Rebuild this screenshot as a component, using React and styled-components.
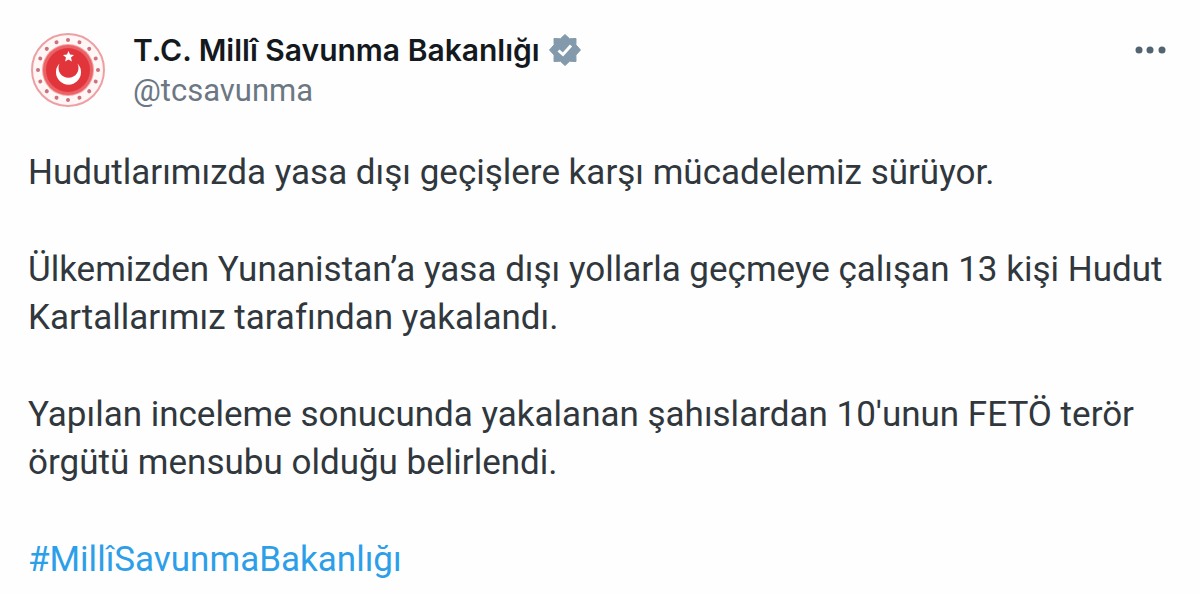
import React from "react";
import styled, { createGlobalStyle } from "styled-components";

const GlobalStyle = createGlobalStyle`
  * {
    box-sizing: border-box;
  }
  body {
    margin: 0;
    background: #fefefe;
    color: #30373d;
    font-family: Roboto, "Liberation Sans", sans-serif;
  }
`;

const Post = styled.article`
  padding: 29px 28px 8px;
`;

const Header = styled.header`
  display: flex;
  align-items: flex-start;
`;

const Avatar = styled.svg`
  flex: none;
  width: 80px;
  height: 80px;
`;

const Names = styled.div`
  flex: 1;
  padding-left: 25px;
`;

const NameRow = styled.div`
  display: flex;
  align-items: center;
  gap: 8px;
  height: 42px;
`;

const Name = styled.a`
  color: #14191e;
  font-family: Inter, Roboto, sans-serif;
  font-size: 30px;
  font-weight: 600;
  line-height: 42px;
  text-decoration: none;
`;

const Badge = styled.svg`
  width: 34px;
  height: 34px;
`;

const Handle = styled.a`
  display: block;
  color: #6b7883;
  font-size: 31px;
  line-height: 40px;
  text-decoration: none;
`;

const MoreButton = styled.button`
  display: flex;
  align-items: center;
  height: 42px;
  padding: 0;
  border: 0;
  background: none;
  cursor: pointer;
`;

const Body = styled.div`
  display: flex;
  flex-direction: column;
  gap: 49px;
  padding-top: 38px;
`;

const Text = styled.p`
  margin: 0;
  font-size: 35px;
  line-height: 48px;
`;

const Hashtag = styled.a`
  color: #2d9fe9;
  text-decoration: none;
`;

const stars = Array.from({ length: 16 }, (_, i) => i * 22.5);

const Emblem = () => (
  <Avatar viewBox="0 0 80 80" role="img" aria-label="T.C. Millî Savunma Bakanlığı">
    <circle cx="40" cy="41" r="36" fill="#fff6f5" stroke="#eda0a3" strokeWidth="2" />
    {stars.map((angle) => (
      <circle
        key={angle}
        cx="40"
        cy="11"
        r="2"
        fill="#c9737d"
        transform={`rotate(${angle} 40 41)`}
      />
    ))}
    <circle cx="40" cy="41" r="26" fill="#f3a3a3" />
    <circle cx="40" cy="41" r="25" fill="#ea6266" />
    <circle cx="40" cy="41" r="22" fill="#e2353b" />
    <path d="M31.500 34.500A12.500 12.500 0 1 0 49.500 34.500A10 10 0 1 1 31.500 34.500Z" fill="#fff" />
    <path
      d="M40.500 22l1.500 3.500 4 .4-3 2.700.9 4-3.400-2-3.400 2 .9-4-3-2.700 4-.4z"
      fill="#fff"
    />
  </Avatar>
);

const Verified = () => (
  <Badge viewBox="0 0 34 34" role="img" aria-label="Onaylı hesap">
    <path
      d="M17 1.500l4.600 4.300 6.400-.3-.1 6.300 4.600 5.200-4.600 5 .1 6.500-6.400-.3-4.600 4.300-4.600-4.300-6.400.3.1-6.500-4.600-5 4.600-5.200-.1-6.300 6.400.3z"
      fill="#829aab"
      stroke="#829aab"
      strokeLinejoin="round"
    />
    <path d="M10.500 17.500l4.500 4 8-9" fill="none" stroke="#fff" strokeWidth="3" />
  </Badge>
);

const App = () => {
  return (
    <>
      <GlobalStyle />
      <Post>
        <Header>
          <Emblem />
          <Names>
            <NameRow>
              <Name href="#profil">T.C. Millî Savunma Bakanlığı</Name>
              <Verified />
            </NameRow>
            <Handle href="#profil">@tcsavunma</Handle>
          </Names>
          <MoreButton aria-label="Daha fazla">
            <svg width="38" height="10" viewBox="0 0 38 10" fill="#536471">
              <circle cx="5" cy="5" r="3.500" />
              <circle cx="16" cy="5" r="3.500" />
              <circle cx="28" cy="5" r="3.500" />
            </svg>
          </MoreButton>
        </Header>
        <Body lang="tr">
          <Text>Hudutlarımızda yasa dışı geçişlere karşı mücadelemiz sürüyor.</Text>
          <Text>
            Ülkemizden Yunanistan’a yasa dışı yollarla geçmeye çalışan 13 kişi Hudut
            Kartallarımız tarafından yakalandı.
          </Text>
          <Text>
            Yapılan inceleme sonucunda yakalanan şahıslardan 10'unun FETÖ terör
            örgütü mensubu olduğu belirlendi.
          </Text>
          <Text>
            <Hashtag href="#MillîSavunmaBakanlığı">#MillîSavunmaBakanlığı</Hashtag>
          </Text>
        </Body>
      </Post>
    </>
  );
};

export default App;
